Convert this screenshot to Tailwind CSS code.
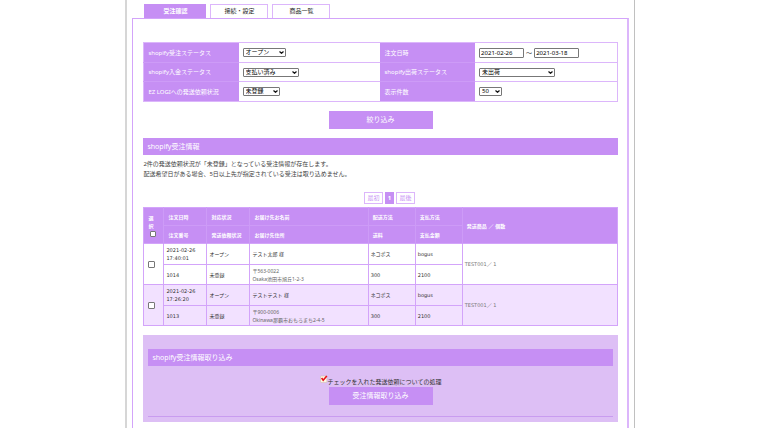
<!DOCTYPE html>
<html lang="ja">
<head>
<meta charset="utf-8">
<meta name="viewport" content="width=device-width, initial-scale=1">
<title>受注確認</title>
<script src="https://cdn.jsdelivr.net/npm/@tailwindcss/browser@4"></script>
</head>
<body class="bg-white font-['Noto_Sans','Noto_Sans_CJK_JP',sans-serif] text-[6px] leading-[10px] text-[#444]">
<div class="mx-auto flex min-h-screen w-[67%] flex-col border-x border-l-2 border-[#c0c0c0] border-l-[#d6d6d6] px-[5px] pt-1">
  <nav class="flex items-end gap-1 pl-3 text-center text-[6px] leading-[13px]">
    <a href="#" class="w-[62px] bg-[#c68ff4] pt-px font-bold text-white">受注確認</a>
    <a href="#" class="w-[58px] border border-b-0 border-[#dcb6fb] text-[#222]">接続・設定</a>
    <a href="#" class="w-[58px] border border-b-0 border-[#dcb6fb] text-[#222]">商品一覧</a>
  </nav>
  <main class="flex-1 border border-r-2 border-b-0 border-[#d3a4fa] border-r-[#dcb6fb] pt-[23px] pr-[9px] pl-[10px]">
    <form>
      <table class="w-full table-fixed border-collapse border border-[#dcb6fb]">
        <colgroup><col class="w-1/5"><col class="w-[30%]"><col class="w-1/5"><col class="w-[30%]"></colgroup>
        <tbody>
        <tr class="h-5">
          <th class="border-b border-[#cd9bf7] bg-[#c68ff4] px-1 text-left font-normal text-white"><label for="order">shopify受注ステータス</label></th>
          <td class="border-b border-[#dcb6fb] px-1">
            <div class="relative w-[43px]">
              <select id="order" class="block h-[9px] w-full appearance-none rounded-[1px] border border-[#777] bg-white px-[2px] text-[6px] leading-[7px] text-black"><option>オープン</option><option>クローズ</option></select>
              <svg class="pointer-events-none absolute top-[3px] right-[2px] h-[3px] w-[5px]" viewBox="0 0 5 3" fill="none" stroke="#111" stroke-width="1.2"><path d="M.5.5 2.5 2.3 4.5.5"/></svg>
            </div>
          </td>
          <th class="border-b border-[#cd9bf7] bg-[#c68ff4] px-1 text-left font-normal text-white"><label for="from">注文日時</label></th>
          <td class="border-b border-[#dcb6fb] px-1">
            <div class="flex items-center gap-[2px]"><input id="from" type="text" value="2021-02-26" class="h-[10px] w-[45px] rounded-[1px] border border-[#777] px-px text-[6px] text-black"><span>～</span><input type="text" aria-label="注文日時（終了）" value="2021-03-18" class="h-[10px] w-[45px] rounded-[1px] border border-[#777] px-px text-[6px] text-black"></div>
          </td>
        </tr>
        <tr class="h-[19px]">
          <th class="border-b border-[#cd9bf7] bg-[#c68ff4] px-1 text-left font-normal text-white"><label for="pay">shopify入金ステータス</label></th>
          <td class="border-b border-[#dcb6fb] px-1">
            <div class="relative w-[56px]">
              <select id="pay" class="block h-[9px] w-full appearance-none rounded-[1px] border border-[#777] bg-white px-[2px] text-[6px] leading-[7px] text-black"><option>支払い済み</option><option>未払い</option></select>
              <svg class="pointer-events-none absolute top-[3px] right-[2px] h-[3px] w-[5px]" viewBox="0 0 5 3" fill="none" stroke="#111" stroke-width="1.2"><path d="M.5.5 2.5 2.3 4.5.5"/></svg>
            </div>
          </td>
          <th class="border-b border-[#cd9bf7] bg-[#c68ff4] px-1 text-left font-normal text-white"><label for="ship">shopify出荷ステータス</label></th>
          <td class="border-b border-[#dcb6fb] px-1">
            <div class="relative w-[76px]">
              <select id="ship" class="block h-[9px] w-full appearance-none rounded-[1px] border border-[#777] bg-white px-[2px] text-[6px] leading-[7px] text-black"><option>未出荷</option><option>出荷済み</option></select>
              <svg class="pointer-events-none absolute top-[3px] right-[2px] h-[3px] w-[5px]" viewBox="0 0 5 3" fill="none" stroke="#111" stroke-width="1.2"><path d="M.5.5 2.5 2.3 4.5.5"/></svg>
            </div>
          </td>
        </tr>
        <tr class="h-5">
          <th class="bg-[#c68ff4] px-1 text-left font-normal text-white"><label for="req">EZ LOGIへの発送依頼状況</label></th>
          <td class="px-1">
            <div class="relative w-[37px]">
              <select id="req" class="block h-[9px] w-full appearance-none rounded-[1px] border border-[#777] bg-white px-[2px] text-[6px] leading-[7px] text-black"><option>未登録</option><option>登録済</option></select>
              <svg class="pointer-events-none absolute top-[3px] right-[2px] h-[3px] w-[5px]" viewBox="0 0 5 3" fill="none" stroke="#111" stroke-width="1.2"><path d="M.5.5 2.5 2.3 4.5.5"/></svg>
            </div>
          </td>
          <th class="bg-[#c68ff4] px-1 text-left font-normal text-white"><label for="count">表示件数</label></th>
          <td class="px-1">
            <div class="relative w-[23px]">
              <select id="count" class="block h-[9px] w-full appearance-none rounded-[1px] border border-[#777] bg-white px-[2px] text-[6px] leading-[7px] text-black"><option>50</option><option>100</option></select>
              <svg class="pointer-events-none absolute top-[3px] right-[2px] h-[3px] w-[5px]" viewBox="0 0 5 3" fill="none" stroke="#111" stroke-width="1.2"><path d="M.5.5 2.5 2.3 4.5.5"/></svg>
            </div>
          </td>
        </tr>
        </tbody>
      </table>
      <button type="submit" class="mx-auto mt-[9px] block h-[18px] w-[104px] bg-[#c68ff4] text-[7px] leading-[18px] text-white">絞り込み</button>
    </form>

    <h2 class="mt-[9px] bg-[#c68ff4] px-1 text-[7px] leading-[17px] text-white">shopify受注情報</h2>
    <p class="mt-1">2件の発送依頼状況が「未登録」となっている受注情報が存在します。<br>配送希望日がある場合、5日以上先が指定されている受注は取り込めません。</p>

    <nav aria-label="ページ" class="mt-[13px] flex justify-center gap-[2px] pl-[18px] text-center text-[6px] leading-[10px] text-[#c68ff4]">
      <a href="#" class="w-[19px] border border-[#dcb6fb]">最初</a>
      <a href="#" aria-current="page" class="w-[9px] border border-[#c68ff4] bg-[#c68ff4] font-bold text-white">1</a>
      <a href="#" class="w-[19px] border border-[#dcb6fb]">最後</a>
    </nav>

    <table class="mt-[3px] w-full table-fixed border-collapse border border-[#d3a4fa] font-['DejaVu_Sans','Noto_Sans_CJK_JP',sans-serif] text-[5px] leading-[8px]">
      <colgroup><col class="w-5"><col class="w-[43px]"><col class="w-[43px]"><col class="w-[25%]"><col class="w-[47px]"><col class="w-[47px]"><col></colgroup>
      <thead class="bg-[#c68ff4] text-left text-white">
        <tr class="h-[18px]">
          <th rowspan="2" class="border-r border-[#cd9bf7] px-1 leading-[8px]"><label for="all">選<br>択</label><input id="all" type="checkbox" class="mx-[2px] mt-px block size-[6px] appearance-none rounded-[1px] border border-[#777] bg-white"></th>
          <th class="border-r border-b border-[#cd9bf7] px-1">注文日時</th>
          <th class="border-r border-b border-[#cd9bf7] px-1">対応状況</th>
          <th class="border-r border-b border-[#cd9bf7] px-1">お届け先お名前</th>
          <th class="border-r border-b border-[#cd9bf7] px-1">配送方法</th>
          <th class="border-r border-b border-[#cd9bf7] px-1">支払方法</th>
          <th rowspan="2" class="px-1">発送商品 ／ 個数</th>
        </tr>
        <tr class="h-[18px]">
          <th class="border-r border-[#cd9bf7] px-1">注文番号</th>
          <th class="border-r border-[#cd9bf7] px-1 whitespace-nowrap">発送依頼状況</th>
          <th class="border-r border-[#cd9bf7] px-1">お届け先住所</th>
          <th class="border-r border-[#cd9bf7] px-1">送料</th>
          <th class="border-r border-[#cd9bf7] px-1">支払金額</th>
        </tr>
      </thead>
      <tbody class="text-[#333]">
        <tr class="h-[21px]">
          <td rowspan="2" class="border border-[#d3a4fa] px-1"><input type="checkbox" aria-label="1014を選択" class="block size-[7px] appearance-none rounded-[1px] border border-[#777] bg-white"></td>
          <td class="border border-[#d3a4fa] px-[2px]">2021-02-26<br>17:40:01</td>
          <td class="border border-[#d3a4fa] px-[2px]">オープン</td>
          <td class="border border-[#d3a4fa] px-[2px]">テスト太郎 様</td>
          <td class="border border-[#d3a4fa] px-[2px]">ネコポス</td>
          <td class="border border-[#d3a4fa] px-[2px]">bogus</td>
          <td rowspan="2" class="border border-[#d3a4fa] px-[2px] text-[#777]">TEST001／ 1</td>
        </tr>
        <tr class="h-5">
          <td class="border border-[#d3a4fa] px-[2px]">1014</td>
          <td class="border border-[#d3a4fa] px-[2px]">未登録</td>
          <td class="border border-[#d3a4fa] px-[2px] font-['Noto_Sans','Noto_Sans_CJK_JP',sans-serif] text-[#666]">〒563-0022<br>Osaka池田市旭丘1-2-3</td>
          <td class="border border-[#d3a4fa] px-[2px]">300</td>
          <td class="border border-[#d3a4fa] px-[2px]">2100</td>
        </tr>
        <tr class="h-[21px] bg-[#f2e1ff]">
          <td rowspan="2" class="border border-[#d3a4fa] px-1"><input type="checkbox" aria-label="1013を選択" class="block size-[7px] appearance-none rounded-[1px] border border-[#777] bg-white"></td>
          <td class="border border-[#d3a4fa] px-[2px]">2021-02-26<br>17:26:20</td>
          <td class="border border-[#d3a4fa] px-[2px]">オープン</td>
          <td class="border border-[#d3a4fa] px-[2px]">テストテスト 様</td>
          <td class="border border-[#d3a4fa] px-[2px]">ネコポス</td>
          <td class="border border-[#d3a4fa] px-[2px]">bogus</td>
          <td rowspan="2" class="border border-[#d3a4fa] px-[2px] text-[#777]">TEST001／ 1</td>
        </tr>
        <tr class="h-5 bg-[#f2e1ff]">
          <td class="border border-[#d3a4fa] px-[2px]">1013</td>
          <td class="border border-[#d3a4fa] px-[2px]">未登録</td>
          <td class="border border-[#d3a4fa] px-[2px] font-['Noto_Sans','Noto_Sans_CJK_JP',sans-serif] text-[#666]">〒900-0006<br>Okinawa那覇市おもろまち2-4-5</td>
          <td class="border border-[#d3a4fa] px-[2px]">300</td>
          <td class="border border-[#d3a4fa] px-[2px]">2100</td>
        </tr>
      </tbody>
    </table>

    <section class="mt-[9px] bg-[#ddbff5] px-[5px] pt-[14px] pb-[5px]">
      <h2 class="bg-[#c68ff4] px-1 text-[7px] leading-[17px] text-white">shopify受注情報取り込み</h2>
      <p class="mt-[9px] flex items-start justify-center text-[#333]">
        <svg class="size-[8px]" viewBox="0 0 8 8"><rect x=".5" y="1" width="6.4" height="6.4" rx=".6" fill="#fffbe6" stroke="#cdb8b0" stroke-width=".6"/><path d="M1.6 3 3.2 5.2 6.8.9" fill="none" stroke="#e8101c" stroke-width="1.6"/></svg>
        <span class="pt-[2px]">チェックを入れた発送依頼についての処理</span>
      </p>
      <button type="button" class="mx-auto block h-[18px] w-[104px] bg-[#c68ff4] text-[7px] leading-[18px] text-white">受注情報取り込み</button>
      <hr class="mt-[11px] border-[#c99cf0]">
    </section>
  </main>
</div>
</body>
</html>
